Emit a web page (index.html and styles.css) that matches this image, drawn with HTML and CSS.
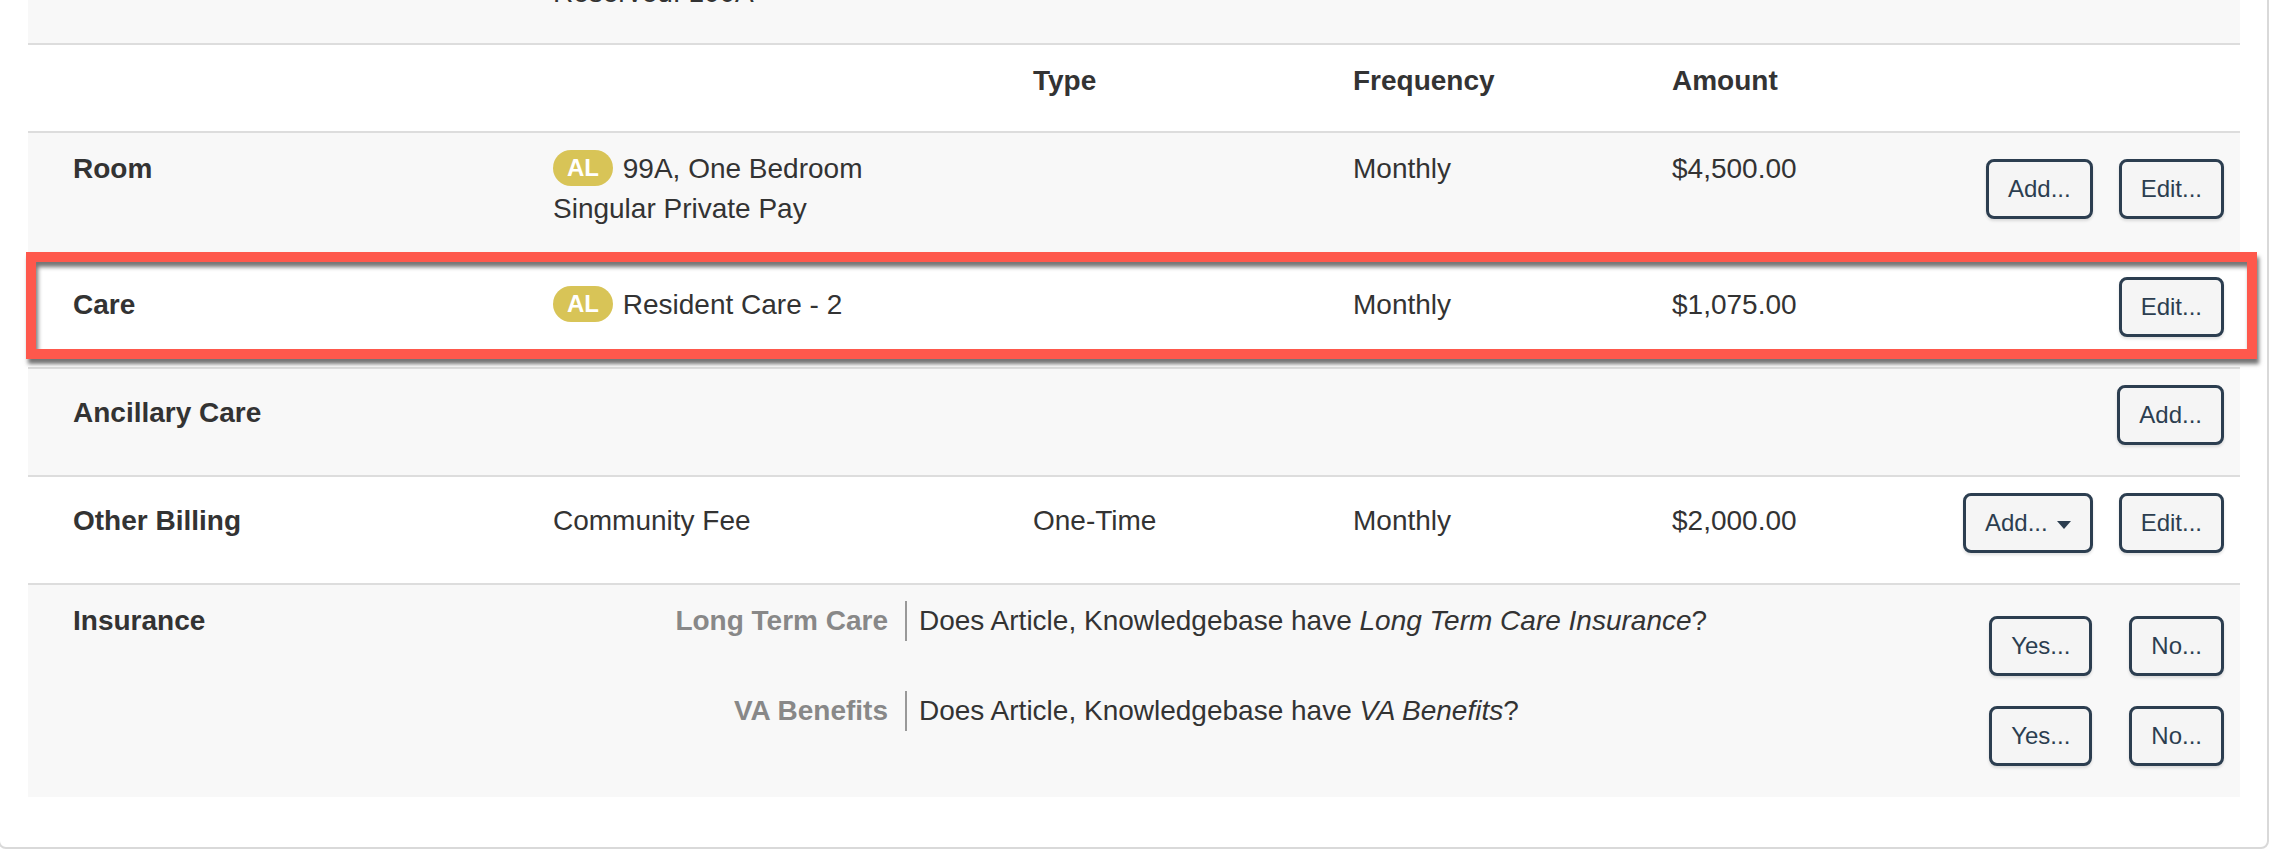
FILE: index.html
```html
<!DOCTYPE html>
<html lang="en">
<head>
<meta charset="utf-8">
<title>Billing</title>
<link rel="stylesheet" href="styles.css">
</head>
<body>
<div class="card">
  <div class="panel">
    <div class="row gray prev">
      <div class="c lbl"></div>
      <div class="c">Reserved: 100A</div>
      <div class="c"></div><div class="c"></div><div class="c"></div><div class="c"></div>
    </div>
    <div class="row head">
      <div class="c"></div>
      <div class="c"></div>
      <div class="c th">Type</div>
      <div class="c th">Frequency</div>
      <div class="c th">Amount</div>
      <div class="c"></div>
    </div>
    <div class="row gray room">
      <div class="c lbl">Room</div>
      <div class="c"><span class="badge">AL</span> 99A, One Bedroom<br>Singular Private Pay</div>
      <div class="c"></div>
      <div class="c">Monthly</div>
      <div class="c">$4,500.00</div>
      <div class="c actions"><button class="btn">Add...</button><button class="btn">Edit...</button></div>
    </div>
    <div class="row care">
      <div class="c lbl">Care</div>
      <div class="c"><span class="badge">AL</span> Resident Care - 2</div>
      <div class="c"></div>
      <div class="c">Monthly</div>
      <div class="c">$1,075.00</div>
      <div class="c actions"><button class="btn">Edit...</button></div>
      <div class="highlight"></div>
    </div>
    <div class="row gray">
      <div class="c lbl">Ancillary Care</div>
      <div class="c"></div>
      <div class="c"></div>
      <div class="c"></div>
      <div class="c"></div>
      <div class="c actions"><button class="btn">Add...</button></div>
    </div>
    <div class="row">
      <div class="c lbl">Other Billing</div>
      <div class="c">Community Fee</div>
      <div class="c">One-Time</div>
      <div class="c">Monthly</div>
      <div class="c">$2,000.00</div>
      <div class="c actions"><button class="btn">Add...<span class="caret"></span></button><button class="btn">Edit...</button></div>
    </div>
    <div class="row gray ins">
      <div class="c lbl">Insurance</div>
      <div class="c ins-list">
        <div class="ins-item">
          <div class="ins-name">Long Term Care</div>
          <div class="ins-q">Does Article, Knowledgebase have <em>Long Term Care Insurance</em>?</div>
          <div class="ins-btns"><button class="btn">Yes...</button><button class="btn">No...</button></div>
        </div>
        <div class="ins-item">
          <div class="ins-name">VA Benefits</div>
          <div class="ins-q">Does Article, Knowledgebase have <em>VA Benefits</em>?</div>
          <div class="ins-btns"><button class="btn">Yes...</button><button class="btn">No...</button></div>
        </div>
      </div>
    </div>
  </div>
</div>
</body>
</html>
```

FILE: styles.css
```css
* { box-sizing: border-box; }
html, body { margin: 0; padding: 0; background: #fff; }
body {
  font-family: "Liberation Sans", Arial, Helvetica, sans-serif;
  font-size: 28px;
  line-height: 40px;
  color: #333;
  overflow: hidden;
}
.card {
  margin: -45px 3px 0 -2px;
  border: 2px solid #d9d9d9;
  border-radius: 8px;
  padding: 0 27px 50px 28px;
  background: #fff;
}
.row {
  display: grid;
  grid-template-columns: 480px 480px 320px 319px 1fr auto;
  padding: 16px 16px 30px 45px;
  background: #fff;
}
.row + .row { border-top: 2px solid #ddd; }
.gray { background: #f8f8f8; }
.c { padding-top: 8px; }
.prev .c, .head .c, .room .c, .ins .c { padding-top: 0; }
.th, .lbl { font-weight: bold; }
.row .actions {
  display: flex;
  justify-content: flex-end;
  align-items: flex-start;
  gap: 26px;
  padding-top: 0;
}
.row.room .actions { padding-top: 10px; }
.btn {
  display: inline-flex;
  align-items: center;
  height: 60px;
  margin: 0;
  padding: 0 19px;
  border: 3px solid #2c3e50;
  border-radius: 8px;
  background: #f5f5f5;
  color: #2c3e50;
  font-family: "Liberation Sans", Arial, Helvetica, sans-serif;
  font-size: 24px;
  line-height: 54px;
  box-shadow: 0 2px 3px rgba(0, 0, 0, 0.12);
}
.caret {
  display: inline-block;
  width: 0;
  height: 0;
  margin: 3px 0 0 9px;
  border-top: 8px solid #2c3e50;
  border-left: 7.5px solid transparent;
  border-right: 7.5px solid transparent;
}
.badge {
  display: inline-block;
  height: 36px;
  line-height: 36px;
  padding: 0 14px;
  border-radius: 18px;
  background: #d8c457;
  color: #fff;
  font-size: 24px;
  font-weight: bold;
  vertical-align: 2px;
  margin-right: 2px;
}
.care { position: relative; }
.highlight {
  position: absolute;
  left: -2px;
  top: -9px;
  width: 2231px;
  height: 107px;
  border: 10px solid #fe584c;
  box-shadow: 2px 5px 4px rgba(0, 0, 0, 0.55), inset 2px 5px 4px rgba(0, 0, 0, 0.55);
  pointer-events: none;
}
.ins-list {
  grid-column: 2 / -1;
  display: flex;
  flex-direction: column;
  gap: 15px;
  padding-bottom: 1px;
}
.ins-item { display: flex; align-items: flex-start; }
.ins-name {
  width: 335px;
  text-align: right;
  font-weight: bold;
  color: #888;
}
.ins-q {
  flex: 1;
  margin-left: 17px;
  padding-left: 12px;
  border-left: 2px solid #999;
}
.ins-btns {
  display: flex;
  gap: 37px;
  margin-top: 15px;
}
```
